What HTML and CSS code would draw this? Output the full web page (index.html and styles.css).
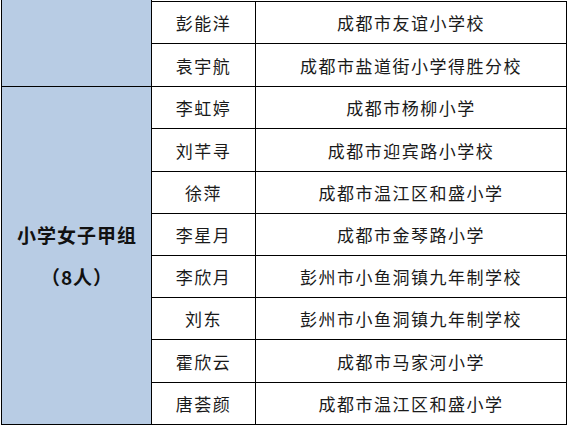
FILE: index.html
```html
<!DOCTYPE html>
<html lang="zh-CN">
<head>
<meta charset="utf-8">
<title>名单</title>
<link rel="stylesheet" href="styles.css">
</head>
<body>
<div class="sheet">
  <div class="group group-top"></div>
  <div class="group group-main"><span>小学女子甲组</span><span>（8人）</span></div>

  <div class="cell name first">彭能洋</div><div class="cell school first">成都市友谊小学校</div>
  <div class="cell name">袁宇航</div><div class="cell school">成都市盐道街小学得胜分校</div>
  <div class="cell name">李虹婷</div><div class="cell school">成都市杨柳小学</div>
  <div class="cell name">刘芊寻</div><div class="cell school">成都市迎宾路小学校</div>
  <div class="cell name">徐萍</div><div class="cell school">成都市温江区和盛小学</div>
  <div class="cell name">李星月</div><div class="cell school">成都市金琴路小学</div>
  <div class="cell name">李欣月</div><div class="cell school">彭州市小鱼洞镇九年制学校</div>
  <div class="cell name">刘东</div><div class="cell school">彭州市小鱼洞镇九年制学校</div>
  <div class="cell name">霍欣云</div><div class="cell school">成都市马家河小学</div>
  <div class="cell name">唐荟颜</div><div class="cell school">成都市温江区和盛小学</div>
</div>
</body>
</html>
```

FILE: styles.css
```css
* { box-sizing: border-box; }

html, body {
  margin: 0;
  padding: 0;
  background: #ffffff;
}

body {
  font-family: "Noto Sans CJK SC", "Noto Sans", sans-serif;
  color: #1a1a1a;
}

.sheet {
  margin-left: 1px;
  border-left: 1px solid #000;
  display: grid;
  grid-template-columns: 150px 104px 311px;
  grid-template-rows: 44px 43px 42px 43px 42px 42px 42px 42px 43px 42px;
  width: 566px;
}

.group {
  grid-column: 1;
  background: #b8cce4;
  border-right: 1px solid #000;
  border-bottom: 1px solid #000;
}

.group-top {
  grid-row: 1 / 3;
}

.group-main {
  grid-row: 3 / 11;
  display: flex;
  flex-direction: column;
  align-items: center;
  justify-content: center;
  font-weight: bold;
  font-size: 19px;
  letter-spacing: 1px;
  line-height: 42px;
  color: #111;
  padding-left: 1px;
}

.cell {
  display: flex;
  align-items: center;
  justify-content: center;
  border-right: 1px solid #000;
  border-bottom: 1px solid #000;
  font-size: 17px;
  letter-spacing: 1.5px;
  white-space: nowrap;
}

.name { grid-column: 2; }
.school { grid-column: 3; }

.first {
  margin-top: 1px;
  border-top: 1px solid #000;
}
```
